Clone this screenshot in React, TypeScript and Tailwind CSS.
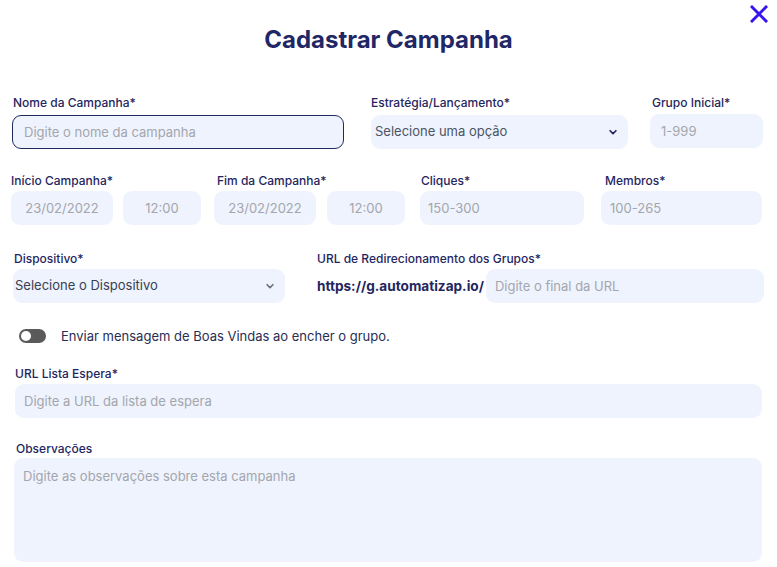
import React, { useState } from 'react';

const labelCls = 'block text-[12px] leading-[14px] font-medium text-[#1f2660]';
const fieldCls =
  'block h-[34px] rounded-[9px] bg-[#eff3fd] text-[13px] text-[#4b5563] placeholder:text-[#a3a6ad] outline-none';

const Chevron = ({ color = '#1f2660' }: { color?: string }) => (
  <svg
    className="pointer-events-none absolute right-[10px] top-1/2 -translate-y-1/2"
    width="10"
    height="10"
    viewBox="0 0 24 24"
    fill="none"
    stroke={color}
    strokeWidth={4}
    strokeLinecap="round"
    strokeLinejoin="round"
  >
    <path d="M5 9l7 7 7-7" />
  </svg>
);

const App: React.FC = () => {
  const [welcome, setWelcome] = useState(false);

  return (
    <div className="relative h-[567px] w-[777px] overflow-hidden bg-white font-['Inter',sans-serif]">
      {/* Close */}
      <button className="absolute right-[9px] top-[5px] text-[#3a14f0]">
        <svg width="18" height="18" viewBox="0 0 18 18" fill="none" stroke="currentColor" strokeWidth={3} strokeLinecap="square">
          <path d="M2 2l14 14M16 2L2 16" />
        </svg>
      </button>

      <h1 className="pt-[26px] text-center text-[24px] font-bold leading-[28px] text-[#1f2766]">
        Cadastrar Campanha
      </h1>

      {/* Row 1 */}
      <div className="mt-[42px] flex pl-[12px]">
        <div className="w-[332px]">
          <label className={`${labelCls} pl-[1px]`}>Nome da Campanha*</label>
          <input
            className={`${fieldCls} mt-[5px] w-full border border-[#1f2a5c] px-[11px]`}
            placeholder="Digite o nome da campanha"
          />
        </div>
        <div className="ml-[27px] w-[257px]">
          <label className={labelCls}>Estratégia/Lançamento*</label>
          <div className="relative mt-[5px]">
            <select className={`${fieldCls} w-full appearance-none px-[4px] text-[#2a2f55]`}>
              <option>Selecione uma opção</option>
            </select>
            <Chevron />
          </div>
        </div>
        <div className="ml-[22px] w-[113px]">
          <label className={`${labelCls} pl-[2px]`}>Grupo Inicial*</label>
          <input className={`${fieldCls} mt-[4px] w-full px-[11px]`} placeholder="1-999" />
        </div>
      </div>

      {/* Row 2 */}
      <div className="mt-[25px] flex pl-[11px]">
        <div>
          <label className={labelCls}>Início Campanha*</label>
          <div className="mt-[3px] flex gap-[10px]">
            <input className={`${fieldCls} w-[102px] text-center`} placeholder="23/02/2022" />
            <input className={`${fieldCls} w-[78px] text-center`} placeholder="12:00" />
          </div>
        </div>
        <div className="ml-[13px]">
          <label className={`${labelCls} pl-[3px]`}>Fim da Campanha*</label>
          <div className="mt-[3px] flex gap-[11px]">
            <input className={`${fieldCls} w-[102px] text-center`} placeholder="23/02/2022" />
            <input className={`${fieldCls} w-[78px] text-center`} placeholder="12:00" />
          </div>
        </div>
        <div className="ml-[15px] w-[164px]">
          <label className={`${labelCls} pl-[1px]`}>Cliques*</label>
          <input className={`${fieldCls} mt-[3px] w-full px-[8px]`} placeholder="150-300" />
        </div>
        <div className="ml-[17px] w-[161px]">
          <label className={`${labelCls} pl-[4px]`}>Membros*</label>
          <input className={`${fieldCls} mt-[3px] w-full px-[9px]`} placeholder="100-265" />
        </div>
      </div>

      {/* Row 3 */}
      <div className="mt-[27px] flex pl-[13px]">
        <div className="w-[272px]">
          <label className={`${labelCls} pl-[1px]`}>Dispositivo*</label>
          <div className="relative mt-[3px]">
            <select className={`${fieldCls} w-full appearance-none px-[2px] text-[#374151]`}>
              <option>Selecione o Dispositivo</option>
            </select>
            <Chevron color="#6b7280" />
          </div>
        </div>
        <div className="ml-[32px] flex-1 pr-[13px]">
          <label className={labelCls}>URL de Redirecionamento dos Grupos*</label>
          <div className="mt-[3px] flex items-center">
            <span className="text-[13.6px] font-bold text-[#1f2660]">https://g.automatizap.io/</span>
            <input className={`${fieldCls} ml-[2px] min-w-0 flex-1 px-[9px]`} placeholder="Digite o final da URL" />
          </div>
        </div>
      </div>

      {/* Toggle */}
      <div className="mt-[25px] flex items-center pl-[19px]">
        <button
          onClick={() => setWelcome(!welcome)}
          className="flex h-[14px] w-[27px] items-center rounded-full bg-[#5a5a5a] px-[2px]"
        >
          <span className={`h-[10px] w-[10px] rounded-full bg-white ${welcome ? 'ml-auto' : ''}`} />
        </button>
        <span className="ml-[15px] text-[13px] leading-[16px] text-[#2a2e52]">
          Enviar mensagem de Boas Vindas ao encher o grupo.
        </span>
      </div>

      {/* URL Lista Espera */}
      <div className="mt-[23px] px-[15px]">
        <label className={labelCls}>URL Lista Espera*</label>
        <input className={`${fieldCls} mt-[3px] w-full px-[9px]`} placeholder="Digite a URL da lista de espera" />
      </div>

      {/* Observações */}
      <div className="mt-[24px] pl-[14px] pr-[15px]">
        <label className={`${labelCls} pl-[2px]`}>Observações</label>
        <textarea
          className={`${fieldCls} mt-[2px] h-[104px] w-full resize-none px-[9px] py-[9px]`}
          placeholder="Digite as observações sobre esta campanha"
        />
      </div>
    </div>
  );
};

export default App;
